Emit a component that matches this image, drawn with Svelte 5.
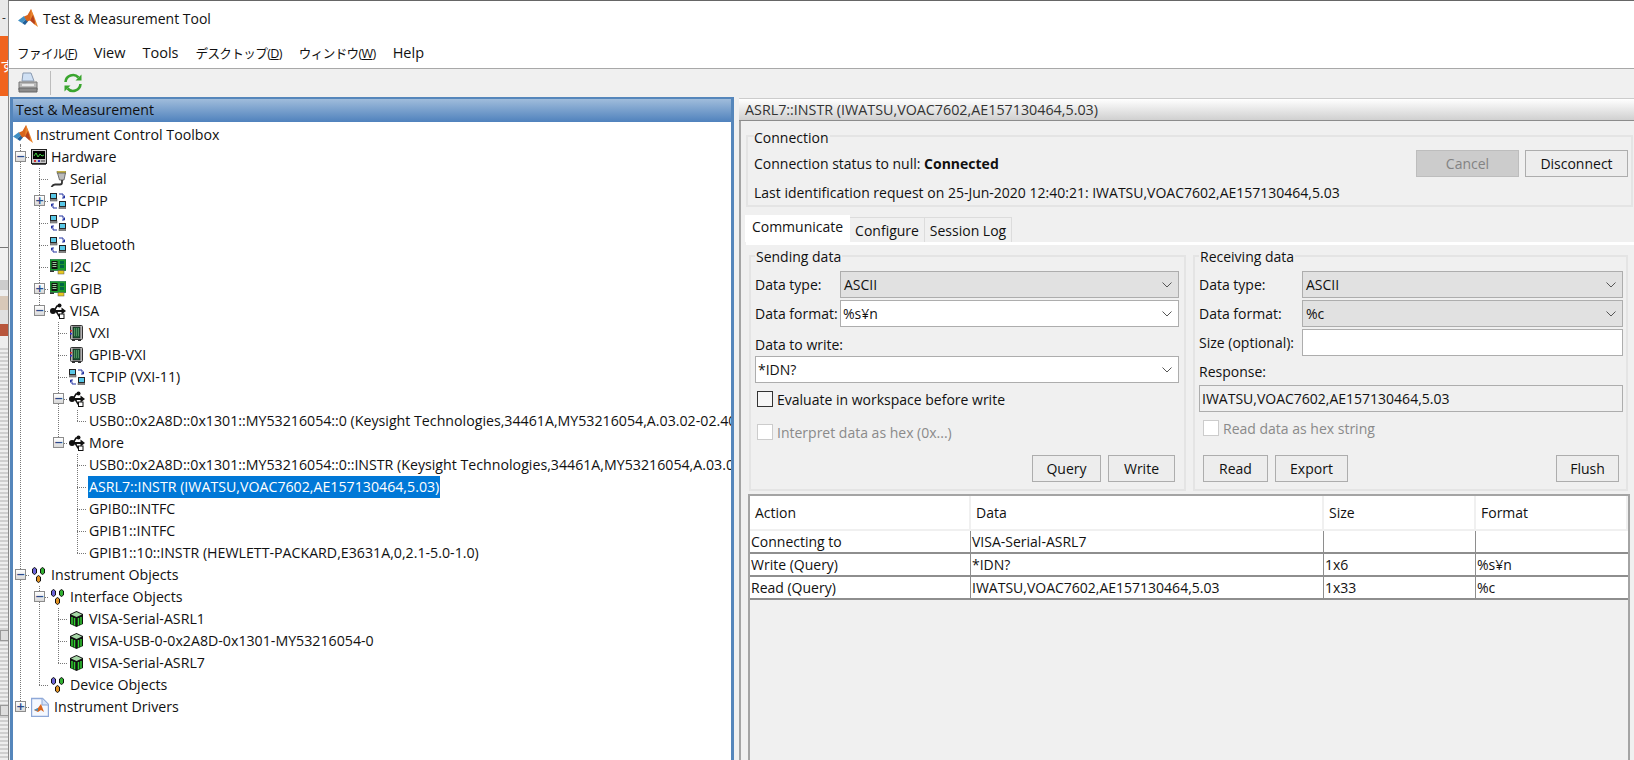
<script>
  // g: one letter per tree column. v = line, t = tee, l = elbow, m/p = open/closed box, M/P = same on a last child
  const rows = [
    { g: "m", icon: "scope", text: "Hardware" },
    { g: "vt", icon: "serial", text: "Serial" },
    { g: "vp", icon: "net", text: "TCPIP" },
    { g: "vt", icon: "net", text: "UDP" },
    { g: "vt", icon: "net", text: "Bluetooth" },
    { g: "vt", icon: "card", text: "I2C" },
    { g: "vp", icon: "card", text: "GPIB" },
    { g: "vM", icon: "usb", text: "VISA" },
    { g: "v t", icon: "vxi", text: "VXI" },
    { g: "v t", icon: "vxi", text: "GPIB-VXI" },
    { g: "v t", icon: "net", text: "TCPIP (VXI-11)" },
    { g: "v m", icon: "usb", text: "USB" },
    { g: "v vl", text: "USB0::0x2A8D::0x1301::MY53216054::0 (Keysight Technologies,34461A,MY53216054,A.03.02-02.40-" },
    { g: "v M", icon: "usb", text: "More" },
    { g: "v  t", text: "USB0::0x2A8D::0x1301::MY53216054::0::INSTR (Keysight Technologies,34461A,MY53216054,A.03.02" },
    { g: "v  t", text: "ASRL7::INSTR (IWATSU,VOAC7602,AE157130464,5.03)", selected: true },
    { g: "v  t", text: "GPIB0::INTFC" },
    { g: "v  t", text: "GPIB1::INTFC" },
    { g: "v  l", text: "GPIB1::10::INSTR (HEWLETT-PACKARD,E3631A,0,2.1-5.0-1.0)" },
    { g: "m", icon: "cubes", text: "Instrument Objects" },
    { g: "vm", icon: "cubes", text: "Interface Objects" },
    { g: "vvt", icon: "cube", text: "VISA-Serial-ASRL1" },
    { g: "vvt", icon: "cube", text: "VISA-USB-0-0x2A8D-0x1301-MY53216054-0" },
    { g: "vvl", icon: "cube", text: "VISA-Serial-ASRL7" },
    { g: "vl", icon: "cubes", text: "Device Objects" },
    { g: "P", icon: "doc", text: "Instrument Drivers" },
  ];

  const log = [
    ["Connecting to", "VISA-Serial-ASRL7", "", ""],
    ["Write (Query)", "*IDN?", "1x6", "%s¥n"],
    ["Read (Query)", "IWATSU,VOAC7602,AE157130464,5.03", "1x33", "%c"],
  ];
</script>

{#snippet logo(w)}
  <svg width={w} height={w} viewBox="0 0 20 20">
    <polygon points="0,11.5 6,7 8.5,10 4,14" fill="#3f8fc4" />
    <polygon points="4,14 8.5,10 10,12.5 7,16" fill="#1f5f99" />
    <polygon points="6,7.5 9.5,6 13,0 15,6 12,11.5 9,12.5" fill="#d9641c" />
    <polygon points="13,0 16,7 20,18 16.5,15.5 13,10.5 12,11.5" fill="#e8842c" />
    <polygon points="12,11.5 15,6 17,13 16.5,15.5" fill="#b8421a" />
  </svg>
{/snippet}

{#snippet icon(kind)}
  <svg class="ic" class:wide={kind === "doc"} width={kind === "doc" ? 18 : 16} height={kind === "doc" ? 20 : 16} viewBox={kind === "doc" ? "0 0 18 20" : "0 0 16 16"}>
    {#if kind === "scope"}
      <rect x="0.5" y="0.5" width="15" height="14" fill="#c8c8c8" stroke="#222" />
      <rect x="2" y="2" width="12" height="8" fill="#000" />
      <polyline points="3,7 5,4 7,8 9,5 11,7 13,6" fill="none" stroke="#3fd03f" />
      <rect x="3" y="11" width="2" height="2" fill="#c33" />
      <rect x="7" y="11" width="2" height="2" fill="#33c" />
      <rect x="10" y="11" width="4" height="2" fill="#888" />
      <rect x="1" y="15" width="14" height="1" fill="#555" />
    {:else if kind === "serial"}
      <rect x="7" y="0" width="9" height="2" fill="#e8d040" stroke="#555" stroke-width="0.5" />
      <polygon points="7.5,2 15.5,2 14,9 9.5,9" fill="#bbb" stroke="#555" stroke-width="0.8" />
      <path d="M12 9v2.5q0 2-2 2H5q-2 0-3.5 2.5" fill="none" stroke="#333" stroke-width="1.8" />
    {:else if kind === "net"}
      <rect x="0.5" y="0.5" width="6" height="5" fill="#58c8e8" stroke="#222" />
      <rect x="0" y="6" width="7" height="2" fill="#999" stroke="#444" stroke-width="0.5" />
      <rect x="9.5" y="8.5" width="6" height="5" fill="#58c8e8" stroke="#222" />
      <rect x="9" y="14" width="7" height="2" fill="#999" stroke="#444" stroke-width="0.5" />
      <path d="M9 1h4v2l1 2M12 5h2.5V2.5" fill="none" stroke="#2030a0" />
      <path d="M7 15H3v-2l-1-2M4 11H1.5v2.5" fill="none" stroke="#2030a0" />
    {:else if kind === "card"}
      <rect x="0" y="0.5" width="16" height="11" fill="#1c9a2c" stroke="#063" stroke-width="0.6" />
      <rect x="1.5" y="2" width="6" height="8" fill="#111" />
      <rect x="2.5" y="3" width="4" height="1" fill="#9c9" />
      <rect x="2.5" y="5" width="4" height="1" fill="#9c9" />
      <rect x="2.5" y="7" width="4" height="1" fill="#9c9" />
      <rect x="10" y="2" width="4" height="3" fill="#064" />
      <rect x="10" y="6" width="4" height="3" fill="#064" />
      <rect x="8" y="11.5" width="6" height="3.5" fill="#e8c820" stroke="#555" stroke-width="0.5" />
      <rect x="0" y="11.5" width="4" height="1.5" fill="#333" />
    {:else if kind === "usb"}
      <path d="M3 8H14" stroke="#111" stroke-width="2" />
      <circle cx="3" cy="8" r="3" fill="#111" />
      <polygon points="11.5,4.5 16,8 11.5,11.5" fill="#111" />
      <path d="M4 8 7 3h2M6 8l3 5h1" fill="none" stroke="#111" stroke-width="1.5" />
      <circle cx="9.5" cy="2.5" r="2" fill="#111" />
      <rect x="9.5" y="11" width="4.5" height="4.5" fill="#fff" stroke="#111" />
    {:else if kind === "vxi"}
      <rect x="1.5" y="0.5" width="12" height="14" rx="1" fill="#b4b4b4" stroke="#333" />
      <rect x="4" y="2" width="7" height="11" fill="#1d5a38" stroke="#111" stroke-width="0.6" />
      <path d="M5 4h5M5 6h5M5 8h5M5 10h5" stroke="#8c8" stroke-dasharray="1 1" />
      <rect x="1" y="5" width="2" height="1.5" fill="#d33" />
      <rect x="1" y="8" width="2" height="1.5" fill="#33d" />
      <rect x="3" y="14.5" width="3" height="1.5" fill="#333" />
      <rect x="9" y="14.5" width="3" height="1.5" fill="#333" />
    {:else if kind === "cubes"}
      <path d="M1.5 2 3.5 0.5 5.5 2V6L3.5 7.5 1.5 6Z" fill="#6a62d8" stroke="#111" />
      <path d="M9.5 2 11.5 0.5 13.5 2V6L11.5 7.5 9.5 6Z" fill="#30b030" stroke="#111" />
      <path d="M5.5 10 7.5 8.5 9.5 10V14L7.5 15.5 5.5 14Z" fill="#e09020" stroke="#111" />
    {:else if kind === "cube"}
      <path d="M1 3 7.5 0 14 3V13L7.5 16 1 13Z" fill="#111" />
      <path d="M2 3.5 7.5 1 13 3.5 7.5 6Z" fill="#a8d8a8" />
      <path d="M3 6V13.5M5.5 7V14.5M9.5 7V14.5M12 6V13.5" stroke="#30d030" stroke-width="1.5" />
    {:else if kind === "doc"}
      <path d="M0.5 1.5H11.5L17.5 7.5V19.5H0.5Z" fill="#f4f8ff" stroke="#8ea8d8" stroke-width="1.4" />
      <path d="M11 1.5V8H17.5" fill="#d8e4f8" stroke="#8ea8d8" />
      <polygon points="3,13 7,11 10,7 13,15 10,13 7,15" fill="#d9641c" />
      <polygon points="3,13 7,11 7,14" fill="#3f8fc4" />
    {/if}
  </svg>
{/snippet}

{#snippet combo(value, tone)}
  <div class="combo {tone}">
    <span>{value}</span>
    <svg width="10" height="6" viewBox="0 0 10 6"><path d="M0.5 0.5 5 5 9.5 0.5" fill="none" stroke="#555" /></svg>
  </div>
{/snippet}

{#snippet check(label, disabled)}
  <div class="check" class:off={disabled}>
    <i></i>
    <span>{label}</span>
  </div>
{/snippet}

<div class="app">
  <div class="strip">
    <div class="s-top">-</div>
    <div class="s-orange">す</div>
    <div class="s-blank"></div>
    <div class="s-bits"></div>
    <div class="s-dots"><b></b><b class="low"></b></div>
  </div>

  <div class="window">
    <div class="title">
      {@render logo(20)}
      <span>Test &amp; Measurement Tool</span>
    </div>
    <div class="menu">
      <span><small>ファイル(<u>F</u>)</small></span>
      <span>View</span>
      <span>Tools</span>
      <span><small>デスクトップ(<u>D</u>)</small></span>
      <span><small>ウィンドウ(<u>W</u>)</small></span>
      <span>Help</span>
    </div>
    <div class="toolbar">
      <svg width="20" height="22" viewBox="0 0 20 22">
        <path d="M5 1h8l3 8H4Z" fill="#cfe0f4" stroke="#8a9ab0" />
        <path d="M1 10h18v8H1Z" fill="#b8b8b8" stroke="#777" />
        <path d="M1 16h18v4H1Z" fill="#8c8c8c" stroke="#666" />
        <rect x="4" y="12" width="12" height="2" fill="#e8e8e8" />
      </svg>
      <div class="tb-sep"></div>
      <svg width="20" height="20" viewBox="0 0 20 20">
        <path d="M2.5 9A7.5 7.5 0 0 1 15.5 4.5" fill="none" stroke="#3aa52e" stroke-width="2.6" />
        <polygon points="12.5,7.5 18.5,7.5 18.5,1.5" fill="#3aa52e" />
        <path d="M17.5 11A7.5 7.5 0 0 1 4.5 15.5" fill="none" stroke="#3aa52e" stroke-width="2.6" />
        <polygon points="7.5,12.5 1.5,12.5 1.5,18.5" fill="#3aa52e" />
      </svg>
    </div>

    <div class="split">
      <section class="browser">
        <h1>Test &amp; Measurement</h1>
        <div class="tree">
          <div class="row root">
            {@render logo(20)}
            <span class="label">Instrument Control Toolbox</span>
            <em></em>
          </div>
          {#each rows as row}
            <div class="row">
              {#each row.g.split("") as g}
                <div class="g {g === ' ' ? 'none' : g}">
                  {#if "mMpP".includes(g)}
                    <div class="box">{"mM".includes(g) ? "−" : "+"}</div>
                  {/if}
                </div>
              {/each}
              {#if row.icon}
                {@render icon(row.icon)}
              {/if}
              <span class="label" class:leaf={!row.icon} class:sel={row.selected}>{row.text}</span>
            </div>
          {/each}
        </div>
      </section>

      <section class="detail">
        <h2>ASRL7::INSTR (IWATSU,VOAC7602,AE157130464,5.03)</h2>
        <div class="body">
          <div class="group conn">
            <div class="legend">Connection</div>
            <div class="conn-row">
              <span>Connection status to null: <b>Connected</b></span>
              <div class="spacer"></div>
              <button class="btn disabled">Cancel</button>
              <button class="btn">Disconnect</button>
            </div>
            <div class="conn-id">Last identification request on 25-Jun-2020 12:40:21: IWATSU,VOAC7602,AE157130464,5.03</div>
          </div>

          <div class="tabs">
            <div class="tab active">Communicate</div>
            <div class="tab t2">Configure</div>
            <div class="tab t3">Session Log</div>
          </div>

          <div class="pane">
            <div class="group send">
              <div class="legend">Sending data</div>
              <div class="field"><label for="">Data type:</label>{@render combo("ASCII", "gray")}</div>
              <div class="field"><label for="">Data format:</label>{@render combo("%s¥n", "white")}</div>
              <div class="caption">Data to write:</div>
              {@render combo("*IDN?", "white")}
              {@render check("Evaluate in workspace before write", false)}
              {@render check("Interpret data as hex (0x...)", true)}
              <div class="actions end">
                <button class="btn query">Query</button>
                <button class="btn write">Write</button>
              </div>
            </div>

            <div class="group recv">
              <div class="legend">Receiving data</div>
              <div class="field"><label for="">Data type:</label>{@render combo("ASCII", "gray")}</div>
              <div class="field"><label for="">Data format:</label>{@render combo("%c", "gray")}</div>
              <div class="field"><label for="">Size (optional):</label><div class="combo white"></div></div>
              <div class="caption">Response:</div>
              <div class="combo resp"><span>IWATSU,VOAC7602,AE157130464,5.03</span></div>
              {@render check("Read data as hex string", true)}
              <div class="actions">
                <button class="btn read">Read</button>
                <button class="btn export">Export</button>
                <div class="spacer"></div>
                <button class="btn flush">Flush</button>
              </div>
            </div>
          </div>

          <div class="table">
            <div class="trow head">
              <div>Action</div><div>Data</div><div>Size</div><div>Format</div>
            </div>
            {#each log as line}
              <div class="trow">
                {#each line as cell}
                  <div>{cell}</div>
                {/each}
              </div>
            {/each}
          </div>
        </div>
      </section>
    </div>
  </div>
</div>

<style>
  :global(body) {
    margin: 0;
    background: #f0f0f0;
  }
  .app {
    display: flex;
    width: 1634px;
    height: 760px;
    overflow: hidden;
    font-family: "Open Sans", "Noto Sans CJK JP", sans-serif;
    font-size: 14px;
    color: #111;
  }

  /* whatever is behind the window */
  .strip {
    width: 8px;
    flex: none;
    display: flex;
    flex-direction: column;
    background: #e9e9e9;
    overflow: hidden;
    color: #333;
  }
  .s-top {
    height: 36px;
    line-height: 36px;
    font-size: 12px;
    padding-left: 2px;
  }
  .s-orange {
    height: 60px;
    background: #f0641e;
    color: #fff;
    font-size: 14px;
    line-height: 60px;
  }
  .s-blank {
    height: 151px;
    background: #f0f0f0;
    border-bottom: 1px solid #777;
  }
  .s-bits {
    height: 100px;
    background: linear-gradient(to bottom, #f0f0f0 0 32px, #ccc 32px 42px, #eee 42px 48px, #d8c8b8 48px 62px, #e0e0e0 62px 76px, #b8563c 76px 88px, #eee 88px);
  }
  .s-dots {
    flex: 1;
    position: relative;
    background: repeating-linear-gradient(to bottom, #cfcfcf 0 2px, #eeeeee 2px 4px);
  }
  .s-dots b {
    position: absolute;
    left: 0;
    top: 282px;
    width: 8px;
    height: 9px;
    background: #ddd;
    border: 1px solid #999;
  }
  .s-dots b.low {
    top: 357px;
  }

  .window {
    flex: 1;
    min-width: 0;
    display: flex;
    flex-direction: column;
    border-left: 1px solid #8a8a8a;
    border-top: 1px solid #666;
    background: #fff;
  }
  .title {
    height: 35px;
    display: flex;
    align-items: center;
    gap: 5px;
    padding-left: 9px;
    font-size: 14px;
  }
  .menu {
    height: 32px;
    display: flex;
    align-items: center;
    gap: 17px;
    padding-left: 8px;
    font-size: 14.5px;
    border-bottom: 1px solid #a8a8a8;
  }
  .menu small {
    font-size: 12.6px;
    letter-spacing: -0.65px;
  }
  .toolbar {
    height: 28px;
    display: flex;
    align-items: center;
    gap: 12px;
    padding-left: 9px;
    background: #f0f0f0;
  }
  .tb-sep {
    width: 1px;
    height: 24px;
    background: #bcbcbc;
  }

  .split {
    flex: 1;
    min-height: 0;
    display: flex;
    background: #f0f0f0;
  }

  /* left tree panel */
  .browser {
    width: 724px;
    margin-left: 1px;
    flex: none;
    display: flex;
    flex-direction: column;
    box-sizing: border-box;
    border: 3px solid #5586bb;
    border-width: 2px 3px 0 3px;
    background: #fff;
    overflow: hidden;
  }
  h1 {
    margin: 0;
    height: 23px;
    line-height: 22px;
    padding-left: 3px;
    font-size: 14.2px;
    font-weight: 400;
    background: linear-gradient(to bottom, #a0bcdb, #4f82bd);
  }
  .tree {
    margin: 2px 0 0 -2px;
    white-space: nowrap;
    font-size: 14.2px;
  }
  .row {
    height: 22px;
    display: flex;
    align-items: center;
    position: relative;
  }
  .root {
    padding-left: 2px;
  }
  .root em {
    position: absolute;
    left: 9px;
    top: 20px;
    height: 2px;
    width: 1px;
    background: #777;
  }
  .label {
    margin-left: 4px;
    line-height: 22px;
  }
  .root .label {
    margin-left: 3px;
  }
  .label.leaf {
    margin-left: 1px;
    padding: 0 1px;
  }
  .label.sel {
    background: #0078d7;
    color: #fff;
  }
  .ic {
    flex: none;
    margin-left: 1px;
  }
  .ic.wide {
    margin-right: 1px;
  }

  /* tree guides, one cell per depth */
  .g {
    width: 19px;
    height: 22px;
    flex: none;
    position: relative;
  }
  .v::before,
  .t::before,
  .m::before,
  .p::before,
  .l::before,
  .M::before,
  .P::before {
    content: "";
    position: absolute;
    left: 9px;
    top: 0;
    bottom: 0;
    width: 1px;
    background: repeating-linear-gradient(to bottom, #777 0 1px, transparent 1px 2px);
  }
  .l::before,
  .M::before,
  .P::before {
    bottom: 11px;
  }
  .t::after,
  .l::after,
  .m::after,
  .p::after,
  .M::after,
  .P::after {
    content: "";
    position: absolute;
    left: 9px;
    right: 0;
    top: 11px;
    height: 1px;
    background: repeating-linear-gradient(to right, #777 0 1px, transparent 1px 2px);
  }
  .box {
    position: absolute;
    z-index: 1;
    left: 4px;
    top: 5px;
    width: 9px;
    height: 9px;
    border: 1px solid #8c8c8c;
    background: linear-gradient(to bottom, #fff, #d8d8d8);
    color: #2a4a8c;
    font: 700 11px/9px "DejaVu Sans", sans-serif;
    text-align: center;
  }

  /* right side */
  .detail {
    flex: 1;
    min-width: 0;
    margin-left: 5px;
    margin-top: 1px;
    display: flex;
    flex-direction: column;
  }
  h2 {
    margin: 0;
    height: 23px;
    line-height: 22px;
    padding-left: 6px;
    font-size: 14.3px;
    font-weight: 400;
    color: #333;
    box-sizing: border-box;
    background: linear-gradient(to bottom, #fff, #d0d0d0);
    border-top: 1px solid #ccc;
    border-bottom: 1px solid #8c8c8c;
  }
  .body {
    flex: 1;
    min-height: 0;
    border-left: 2px solid #a4a4a4;
    display: flex;
    flex-direction: column;
    padding-top: 14px;
  }
  .group {
    box-sizing: border-box;
    border: 2px solid #e4e4e4;
  }
  .legend {
    width: fit-content;
    margin: -8px 0 0 5px;
    padding: 0 1px;
    line-height: 18px;
    background: #f0f0f0;
  }
  .conn {
    height: 72px;
    margin: 0 1px 0 5px;
    padding-left: 6px;
    padding-right: 3px;
  }
  .conn .legend {
    margin-left: 0;
    padding-left: 0;
  }
  .conn-row {
    height: 27px;
    margin-top: 3px;
    display: flex;
    align-items: center;
    gap: 6px;
  }
  .conn-id {
    line-height: 18px;
    margin-top: 7px;
  }
  b {
    font-weight: 700;
  }
  .spacer {
    flex: 1;
  }
  .btn {
    height: 27px;
    padding: 0;
    box-sizing: border-box;
    border: 1px solid #adadad;
    background: #ededed;
    color: #111;
    font: inherit;
    width: 103px;
  }
  .btn.disabled {
    background: #cccccc;
    border-color: #bdbdbd;
    color: #838383;
  }
  .tabs {
    height: 27px;
    margin: 8px 0 0 4px;
    display: flex;
    align-items: flex-end;
  }
  .tab {
    box-sizing: border-box;
    height: 25px;
    line-height: 25px;
    text-align: center;
    border: 1px solid #dcdcdc;
    border-left: 0;
    border-bottom: 0;
  }
  .tab.active {
    height: 27px;
    line-height: 24px;
    width: 105px;
    background: #fff;
    border: 0;
  }
  .t2 {
    width: 75px;
  }
  .t3 {
    width: 87px;
  }
  .pane {
    height: 248px;
    margin-left: 5px;
    box-sizing: border-box;
    border-top: 3px solid #fff;
    display: flex;
    padding: 10px 0 0 3px;
    gap: 7px;
  }
  .send {
    width: 437px;
    padding: 0 5px 0 4px;
    height: 236px;
  }
  .recv {
    width: 435px;
    padding: 0 3px 0 4px;
    height: 236px;
  }
  .send .legend,
  .recv .legend {
    margin-left: 0;
    margin-bottom: 5px;
    margin-top: -9px;
  }
  .field {
    display: flex;
    align-items: center;
    height: 27px;
    margin-bottom: 2px;
  }
  .field label {
    width: 85px;
    flex: none;
    white-space: nowrap;
  }
  .recv .field label {
    width: 103px;
  }
  .field .combo {
    flex: 1;
  }
  .combo {
    height: 27px;
    box-sizing: border-box;
    border: 1px solid #adadad;
    display: flex;
    align-items: center;
    padding: 0 4px 0 2px;
  }
  .combo span {
    flex: 1;
  }
  .combo svg {
    margin-right: 2px;
  }
  .combo.gray {
    background: #e1e1e1;
    padding-left: 3px;
  }
  .combo.white {
    background: #fff;
  }
  .combo.resp {
    background: #f0f0f0;
  }
  .caption {
    height: 18px;
    line-height: 18px;
    margin-top: 9px;
    margin-bottom: 2px;
  }
  .recv .caption {
    margin-top: 7px;
    margin-bottom: 4px;
  }
  .check {
    height: 16px;
    display: flex;
    align-items: center;
    gap: 4px;
    margin: 8px 0 17px 2px;
  }
  .check i {
    width: 14px;
    height: 14px;
    border: 1px solid #333;
    background: #f6f6f6;
    flex: none;
  }
  .check.off {
    color: #8a8a8a;
    margin-bottom: 0;
    margin-top: 17px;
  }
  .check.off i {
    border-color: #ccc;
    background: #fff;
  }
  .recv .check.off {
    margin: 8px 0 0 4px;
  }
  .actions {
    display: flex;
    gap: 7px;
    margin-top: 15px;
  }
  .recv .actions {
    margin-top: 19px;
    padding: 0 4px;
  }
  .actions.end {
    justify-content: flex-end;
    padding-right: 4px;
  }
  .query {
    width: 69px;
  }
  .write {
    width: 67px;
  }
  .read {
    width: 65px;
  }
  .export {
    width: 73px;
  }
  .flush {
    width: 63px;
  }
  .table {
    flex: 1;
    margin: 4px 4px 0 7px;
    border: 2px solid #a4a4a4;
    border-bottom: 0;
  }
  .trow {
    display: grid;
    grid-template-columns: 221px 353px 152px 1fr;
    height: 23px;
    box-sizing: border-box;
    background: #fff;
    border-bottom: 2px solid #8e8e8e;
    line-height: 21px;
  }
  .trow div {
    padding-left: 1px;
    border-right: 1px solid #8e8e8e;
  }
  .trow div:last-child {
    border-right: 0;
  }
  .trow.head {
    height: 35px;
    line-height: 34px;
    border-bottom: 2px solid #f0f0f0;
  }
  .trow.head div {
    padding-left: 5px;
    border-right: 2px solid #f0f0f0;
  }
</style>
